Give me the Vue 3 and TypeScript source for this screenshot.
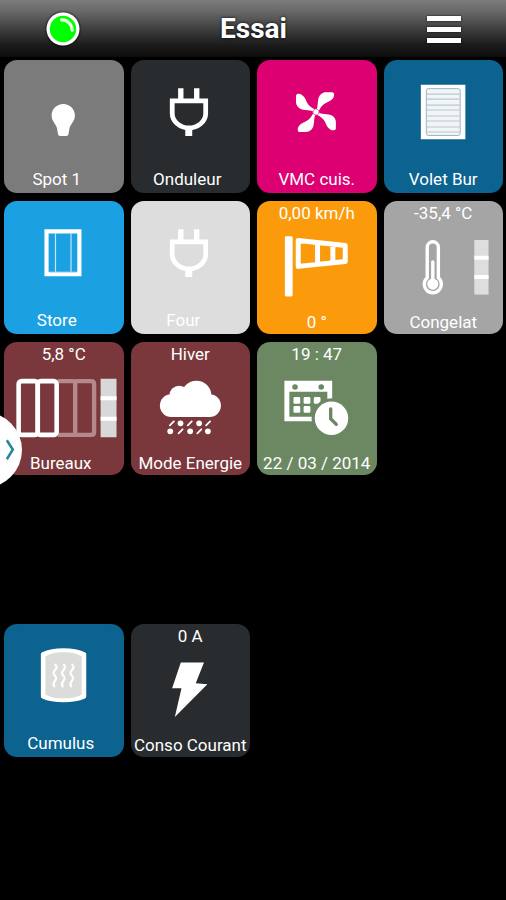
<script setup lang="ts">
import { ref } from 'vue'

type Icon =
  | 'bulb' | 'plug' | 'fan' | 'shutter' | 'blind' | 'wind' | 'thermometer'
  | 'radiator' | 'snow' | 'calendar' | 'heater' | 'bolt'

interface Tile {
  label: string
  icon: Icon
  tone: string
  value?: string
  align?: 'near' | 'far'
}

const tiles: (Tile | null)[] = [
  { label: 'Spot 1', icon: 'bulb', tone: 'gray', align: 'far' },
  { label: 'Onduleur', icon: 'plug', tone: 'dark', align: 'near' },
  { label: 'VMC cuis.', icon: 'fan', tone: 'pink' },
  { label: 'Volet Bur', icon: 'shutter', tone: 'blue' },
  { label: 'Store', icon: 'blind', tone: 'sky', align: 'far' },
  { label: 'Four', icon: 'plug', tone: 'pale', align: 'far' },
  { label: '0 °', value: '0,00 km/h', icon: 'wind', tone: 'orange' },
  { label: 'Congelat', value: '-35,4 °C', icon: 'thermometer', tone: 'silver' },
  { label: 'Bureaux', value: '5,8 °C', icon: 'radiator', tone: 'wine', align: 'near' },
  { label: 'Mode Energie', value: 'Hiver', icon: 'snow', tone: 'wine' },
  { label: '22 / 03 / 2014', value: '19 : 47', icon: 'calendar', tone: 'green' },
  null,
  null, null, null, null,
  { label: 'Cumulus', icon: 'heater', tone: 'blue', align: 'near' },
  { label: 'Conso Courant', value: '0 A', icon: 'bolt', tone: 'dark' },
]

const blades = [0, 90, 180, 270]
const slats = [34, 39, 45, 50, 56, 61, 67, 72]
const drawerOpen = ref(false)
</script>

<template>
  <div class="screen">
    <header class="bar">
      <svg class="status" viewBox="0 0 34 34" role="img" aria-label="En ligne">
        <circle cx="17" cy="17" r="16.5" fill="#fff" />
        <circle cx="17" cy="17" r="13.2" fill="#0f0" />
        <path d="M15.5 7.8 C21 7.6 26 12 26.2 18.2" fill="none" stroke="#e4ffe4" stroke-width="3.2" stroke-linecap="round" />
      </svg>
      <h1>Essai</h1>
      <button class="menu" type="button" aria-label="Menu">
        <span></span><span></span><span></span>
      </button>
    </header>

    <main class="grid">
      <template v-for="(tile, i) in tiles" :key="i">
        <button v-if="tile" type="button" class="tile" :class="[tile.tone, { valued: tile.value }]">
          <span class="value">{{ tile.value }}</span>
          <svg class="icon" viewBox="0 24 120 82" aria-hidden="true">
            <path
              v-if="tile.icon === 'bulb'"
              fill="#fff"
              d="M59.5 44 C66 44 71.2 49 71.2 55.5 C71.2 62 66 64 65.5 70 L64.7 74.5 Q64.3 76 62.8 76 H56.2 Q54.7 76 54.3 74.5 L53.5 70 C53 64 47.8 62 47.8 55.5 C47.8 49 53 44 59.5 44Z"
            />
            <g v-else-if="tile.icon === 'plug'">
              <path fill="#fff" d="M47.3 28H52.7V40H47.3Z M63.3 28H68.7V40H63.3Z M54.5 68H61.5V76H54.5Z" />
              <path fill="none" stroke="#fff" stroke-width="4.8" d="M41.4 40.8H75V53.5C75 61.5 67 68 58.2 68C49.4 68 41.4 61.5 41.4 53.5Z" />
            </g>
            <g v-else-if="tile.icon === 'fan'" transform="translate(59.2 52)">
              <path
                v-for="angle in blades"
                :key="angle"
                :transform="`rotate(${angle})`"
                fill="#fff"
                d="M.6 -2 C2 -6 1.6 -10 2.6 -14 C3.6 -17.6 6.5 -20 10 -20 H16.2 C18.6 -20 18.8 -16.6 17.4 -14.4 C15.6 -11.6 13.4 -10.6 10.4 -9.4 C6.6 -7.8 5 -5 2.4 -.6Z"
              />
              <circle r="3" fill="#fff" stroke="#ee7ab8" stroke-width="1" />
            </g>
            <g v-else-if="tile.icon === 'shutter'">
              <path fill="#fff" d="M37 24.7H81.7V79.3H37Z" />
              <rect x="42.5" y="28.5" width="34" height="47" rx="2" fill="#f2f5f7" stroke="#9db3c0" stroke-width="1" />
              <path v-for="y in slats" :key="y" :d="`M43 ${y}H76`" stroke="#b9c8d1" stroke-width="1.1" />
            </g>
            <g v-else-if="tile.icon === 'blind'" fill="none">
              <path stroke="#fff" stroke-width="4.2" d="M42.7 30.2H75.7V73.2H42.7Z" />
              <path stroke="#bfe6fa" stroke-width="1.2" d="M51.7 32V71M67.3 32V71" />
              <path stroke="#7cc9f0" stroke-width="1" d="M45.5 71H73" />
            </g>
            <g v-else-if="tile.icon === 'wind'">
              <rect x="28" y="35" width="7.8" height="60.7" rx="1.5" fill="#fff" />
              <path fill="none" stroke="#fff" stroke-width="5" stroke-linejoin="round" d="M41.4 39.4L88.6 44.4V60.4L41.4 65.4Z M60.8 42V63M76.2 43.5V61.5" />
            </g>
            <g v-else-if="tile.icon === 'thermometer'">
              <path fill="none" stroke="#fff" stroke-width="3.4" d="M43.4 76.8V46.2A5.6 5.6 0 0 1 54.6 46.2V76.8A8.6 8.6 0 1 1 43.4 76.8Z" />
              <circle cx="49" cy="83.2" r="5.6" fill="#fff" />
              <path stroke="#fff" stroke-width="3.4" stroke-linecap="round" d="M49 61V82" />
              <path fill="#dedede" d="M90.7 39H105V93.7H90.7Z" />
              <path fill="#fff" d="M90.7 54.7H105V58.7H90.7Z M90.7 74H105V78H90.7Z" />
            </g>
            <g v-else-if="tile.icon === 'radiator'">
              <path fill="none" stroke="#b5898c" stroke-width="4.4" d="M54 39H69.5Q71.5 39 71.5 41V91Q71.5 93 69.5 93H54 M71.5 41Q71.5 39 73.5 39H87.5Q90.5 39 90.5 42V90Q90.5 93 87.5 93H73.5Q71.5 93 71.5 91" />
              <rect x="14.7" y="39" width="19.2" height="54" rx="3" fill="none" stroke="#fff" stroke-width="4.6" />
              <rect x="33.9" y="39" width="19" height="54" rx="3" fill="none" stroke="#fff" stroke-width="4.6" />
              <path fill="#d8d8d8" d="M97 36.7H113V95.3H97Z" />
              <path fill="#fff" d="M97 54.3H113V58.3H97Z M97 74.7H113V78.7H97Z" />
            </g>
            <g v-else-if="tile.icon === 'snow'" fill="#fff">
              <circle cx="40.4" cy="63.6" r="11.4" />
              <circle cx="48.4" cy="53.4" r="9.8" />
              <circle cx="65.7" cy="53.6" r="15" />
              <circle cx="78.9" cy="63.6" r="11.4" />
              <path d="M40.4 54H79V75H40.4Z" />
              <circle cx="49.7" cy="81.4" r="2.9" />
              <circle cx="68.4" cy="81.4" r="2.9" />
              <circle cx="39.4" cy="89.4" r="2.9" />
              <circle cx="59.4" cy="89.4" r="2.9" />
              <circle cx="77.2" cy="89.4" r="2.9" />
              <path stroke="#fff" stroke-width="1.8" stroke-linecap="round" d="M39 83.4L43 79.4M57 83.4L61 79.4M75.4 83.4L79.4 79.4M47.8 91.4L51.8 87.4M66.6 91.4L70.6 87.4" />
            </g>
            <g v-else-if="tile.icon === 'calendar'">
              <path fill="#fff" fill-rule="evenodd" d="M27.5 38.7H75.5V79.3H27.5Z M32.5 49.6V74.8H70.6V49.6Z" />
              <g class="cut"><circle cx="38.2" cy="45" r="2.8" /><circle cx="64.5" cy="45" r="2.8" /></g>
              <g fill="#fff">
                <rect x="36.6" y="55" width="6.8" height="6.8" rx="1.4" />
                <rect x="46.8" y="55" width="6.8" height="6.8" rx="1.4" />
                <rect x="57" y="55" width="6.8" height="6.8" rx="1.4" />
                <rect x="36.6" y="64" width="6.8" height="6.8" rx="1.4" />
                <rect x="46.8" y="64" width="6.8" height="6.8" rx="1.4" />
              </g>
              <circle class="cut" cx="74.8" cy="76.3" r="20" />
              <circle cx="74.8" cy="76.3" r="16.8" fill="#fff" />
              <path class="hands" d="M74 67V76.8L79.6 82.4" />
            </g>
            <g v-else-if="tile.icon === 'heater'">
              <path fill="#fff" d="M37 30Q37 28.6 38.4 28C44 25.2 51 24 59.8 24S75.6 25.2 81.2 28Q82.6 28.6 82.6 30V72.6Q82.6 74 81.2 74.6C75.6 77.2 68.6 78.4 59.8 78.4S44 77.2 38.4 74.6Q37 74 37 72.6Z" />
              <path fill="#dcdcda" d="M41.6 32.4C46.5 29.4 52 28.2 59.8 28.2S73.1 29.4 78 32.4V70.4C73.1 73.2 67.6 74.4 59.8 74.4S46.5 73.2 41.6 70.4Z" />
              <path
                v-for="x in [51, 59.5, 68]"
                :key="x"
                fill="none"
                stroke="#fff"
                stroke-width="2.2"
                :d="`M${x} 40C${x + 6} 45 ${x - 5} 46.5 ${x} 51.5C${x + 5} 56 ${x - 5} 58 ${x} 63`"
              />
            </g>
            <path v-else fill="#fff" d="M50 38.3H73.3L65 59.3L76.7 60.3L44 93L50.7 64.3H41.3Z" />
          </svg>
          <span class="label" :class="tile.align">{{ tile.label }}</span>
        </button>
        <div v-else class="empty"></div>
      </template>
    </main>

    <button class="drawer" type="button" aria-label="Ouvrir le panneau" :aria-expanded="drawerOpen" @click="drawerOpen = !drawerOpen">
      <svg viewBox="0 0 22 76" aria-hidden="true">
        <path fill="none" stroke="#2b8798" stroke-width="2.6" d="M6.8 28.2L12.8 37.6L6.8 47.2" />
      </svg>
    </button>
  </div>
</template>

<style>
body {
  background: #000;
}
</style>

<style scoped>
.screen {
  position: relative;
  min-height: 100vh;
  overflow: hidden;
  background: #000;
  color: #fff;
  font-family: Roboto, "Liberation Sans", sans-serif;
}

button {
  margin: 0;
  padding: 0;
  border: 0;
  color: inherit;
  font: inherit;
  cursor: pointer;
}

.bar {
  display: flex;
  align-items: center;
  justify-content: space-between;
  box-sizing: border-box;
  height: 57px;
  padding: 1px 45px 0 46px;
  background: linear-gradient(#7c7c7c 0%, #686868 20%, #404040 50%, #1c1c1c 78%, #0c0c0c 100%);
}

.status {
  width: 34px;
  height: 34px;
  border-radius: 50%;
  box-shadow: 0 0 2px #000;
}

h1 {
  margin: 0;
  font-size: 28px;
  font-weight: 700;
  line-height: 32px;
  text-shadow: 0 0 3px #000;
}

.menu {
  display: flex;
  flex-direction: column;
  gap: 6px;
  width: 34px;
  background: none;
}

.menu span {
  height: 5px;
  background: #fff;
  box-shadow: 0 0 2px #000;
}

.grid {
  display: grid;
  grid-template-columns: repeat(4, minmax(0, 1fr));
  grid-auto-rows: 133px;
  gap: 8px 7px;
  padding: 3px 3px 8px 4px;
}

.tile {
  --tone: #7b7b7b;
  display: flex;
  flex-direction: column;
  align-items: stretch;
  overflow: hidden;
  border-radius: 13px;
  background: var(--tone);
  font-size: 17px;
  line-height: 24px;
  text-align: center;
  white-space: nowrap;
}

.gray { --tone: #7b7b7b; }
.dark { --tone: #282c2e; }
.pink { --tone: #dc0073; }
.blue { --tone: #0c638f; }
.sky { --tone: #1ba1e2; }
.pale { --tone: #dddddd; }
.orange { --tone: #fb9b0b; }
.silver { --tone: #a5a5a5; }
.wine { --tone: #7a383c; }
.green { --tone: #6b8862; }

.value {
  height: 24px;
  line-height: 24px;
}

.icon {
  width: 100%;
  height: 82px;
}

.label {
  padding-top: 1px;
}

.valued .label {
  padding-top: 3px;
}

.label.near {
  padding-right: 6px;
}

.label.far {
  padding-right: 14px;
}

.cut {
  fill: var(--tone);
}

.hands {
  fill: none;
  stroke: var(--tone);
  stroke-width: 3.4;
  stroke-linecap: round;
  stroke-linejoin: round;
}

.drawer {
  position: absolute;
  top: 50%;
  left: -54px;
  display: flex;
  justify-content: flex-end;
  width: 76px;
  height: 76px;
  margin-top: -38px;
  border-radius: 50%;
  background: #fff;
}

.drawer svg {
  width: 22px;
  height: 76px;
}
</style>
